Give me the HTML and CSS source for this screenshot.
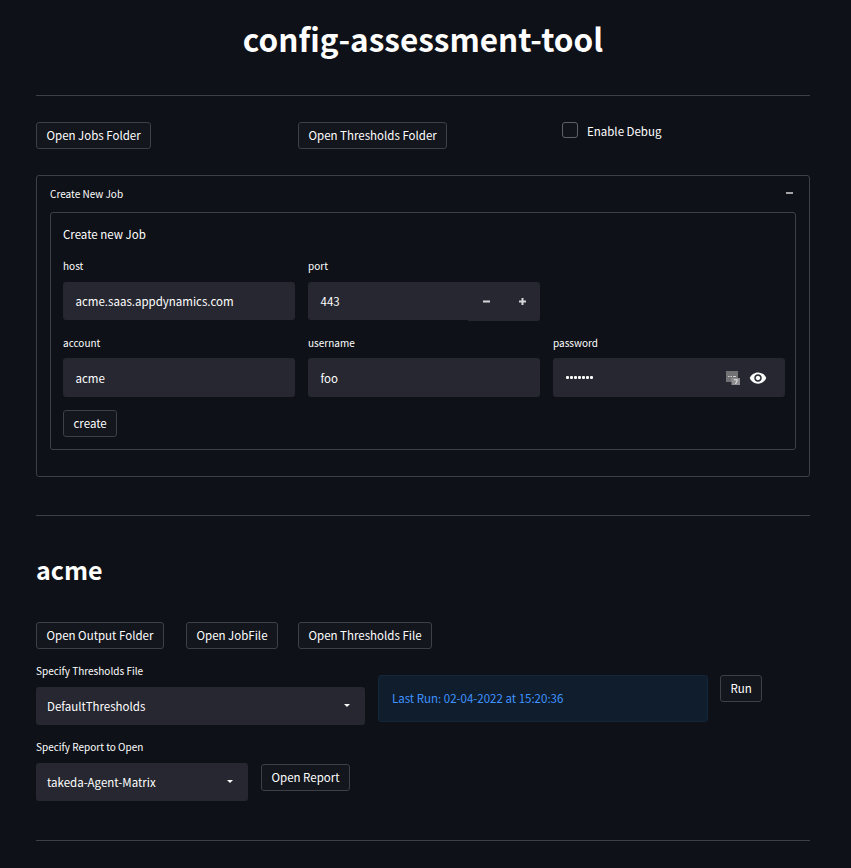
FILE: index.html
```html
<!DOCTYPE html>
<html lang="en">
  <head>
    <meta charset="utf-8">
    <meta content="width=device-width, initial-scale=1.0" name="viewport">
    <link rel="stylesheet" href="styles.css">
    <title>config-assessment-tool</title>
  </head>
  <body>
    <h1>config-assessment-tool</h1>
    <hr class="rule-top">

    <div class="top-row">
      <div><button class="btn">Open Jobs Folder</button></div>
      <div><button class="btn">Open Thresholds Folder</button></div>
      <label class="check"><span class="check-box"></span>Enable Debug</label>
    </div>

    <section class="expander">
      <div class="expander-head">
        <span>Create New Job</span>
        <svg class="collapse" width="7" height="2" viewBox="0 0 7 2"><rect width="7" height="2" fill="#a3a3a8"/></svg>
      </div>
      <form class="job-form">
        <div class="form-title">Create new Job</div>
        <div class="form-grid">
          <div class="field">
            <label>host</label>
            <div class="input">acme.saas.appdynamics.com</div>
          </div>
          <div class="field">
            <label>port</label>
            <div class="stepper">
              <div class="input stepper-value">443</div>
              <div class="stepper-btns">
                <svg width="9" height="9" viewBox="0 0 9 9"><rect x="1" y="3.500" width="7" height="2" fill="#d6d6d8"/></svg>
                <svg width="9" height="9" viewBox="0 0 9 9"><path d="M1 3.500h2.500V1h2v2.500H8v2H5.500V8h-2V5.500H1z" fill="#d6d6d8"/></svg>
              </div>
            </div>
          </div>
          <div></div>
          <div class="field low">
            <label>account</label>
            <div class="input tall">acme</div>
          </div>
          <div class="field low">
            <label>username</label>
            <div class="input tall">foo</div>
          </div>
          <div class="field low">
            <label>password</label>
            <div class="input tall password">
              <span class="dots"><i></i><i></i><i></i><i></i><i></i><i></i><i></i></span>
              <svg class="pw-icon" width="14" height="14" viewBox="0 0 14 14">
                <rect x="0" y="0" width="12" height="11" fill="#727274"/>
                <rect x="5.500" y="7" width="8.500" height="7" fill="#8e8e90"/>
                <path d="M2 5.500h1.500M4.500 5.500H6M7 5.500h3" stroke="#cfcfd1" stroke-width="1"/>
                <path d="M8 8.800h3.500L9.500 13" stroke="#e6e6e6" stroke-width="1" fill="none"/>
              </svg>
              <svg class="eye" width="18" height="18" viewBox="0 0 24 24"><path d="M12 4.500C7 4.500 2.730 7.610 1 12c1.730 4.390 6 7.500 11 7.500s9.270-3.110 11-7.500c-1.730-4.390-6-7.500-11-7.500zM12 17c-2.760 0-5-2.240-5-5s2.240-5 5-5 5 2.240 5 5-2.240 5-5 5zm0-8c-1.660 0-3 1.340-3 3s1.340 3 3 3 3-1.340 3-3-1.340-3-3-3z" fill="#fafafa"/></svg>
            </div>
          </div>
        </div>
        <button class="btn btn-create" type="button">create</button>
      </form>
    </section>

    <hr class="rule-mid">

    <h2>acme</h2>

    <div class="job-btns">
      <button class="btn">Open Output Folder</button>
      <button class="btn">Open JobFile</button>
      <button class="btn">Open Thresholds File</button>
    </div>

    <div class="run-row">
      <div class="field thresholds">
        <label>Specify Thresholds File</label>
        <div class="select">DefaultThresholds<span class="caret"></span></div>
      </div>
      <div class="info">Last Run: 02-04-2022 at 15:20:36</div>
      <button class="btn">Run</button>
    </div>

    <div class="report-row">
      <div class="field report">
        <label>Specify Report to Open</label>
        <div class="select">takeda-Agent-Matrix<span class="caret"></span></div>
      </div>
      <button class="btn">Open Report</button>
    </div>

    <hr class="rule-end">
  </body>
</html>
```

FILE: styles.css
```css
* { box-sizing: border-box; }
html, body { height: 868px; overflow: hidden; }
body {
  margin: 0;
  padding: 0 41px 0 36px;
  background: #0e1117;
  color: #fff;
  font-family: "Noto Sans CJK JP", "Noto Sans", sans-serif;
  font-size: 14px;
}
h1 {
  margin: 0;
  padding-top: 16px;
  height: 95px;
  font-size: 31.500px;
  line-height: 44px;
  font-weight: 700;
  text-align: center;
}
h2 {
  margin: 0;
  height: 71px;
  font-size: 25px;
  line-height: 36px;
  font-weight: 700;
}
hr {
  margin: 0;
  border: 0;
  height: 1px;
  background: #3d4044;
}
.rule-top { margin-bottom: 26px; }
.rule-mid { margin: 38px 0 35px; }
.rule-end { margin-top: 39px; }

.btn {
  height: 27px;
  padding: 0 9.500px;
  border: 1px solid #3d4046;
  border-radius: 3px;
  background: #13161d;
  color: #fff;
  font: 11.500px/25px "Noto Sans CJK JP", "Noto Sans", sans-serif;
  white-space: nowrap;
}

.top-row {
  display: grid;
  grid-template-columns: 246px 248px 1fr;
  column-gap: 16px;
  height: 53px;
}
.check {
  display: flex;
  align-items: flex-start;
  gap: 9px;
  font-size: 11.500px;
  line-height: 18px;
}
.check-box {
  width: 16px;
  height: 16px;
  border: 1px solid #5f6166;
  border-radius: 3px;
  background: #11141b;
}

.expander {
  height: 302px;
  padding: 0 13px;
  border: 1px solid #3d4044;
  border-radius: 3px;
}
.expander-head {
  display: flex;
  justify-content: space-between;
  align-items: center;
  height: 36px;
  padding-bottom: 2px;
  font-size: 10px;
}
.collapse { margin-right: 3px; }
.job-form {
  height: 238px;
  padding: 11px 10px 0 12px;
  border: 1px solid #3d4044;
  border-radius: 3px;
}
.form-title {
  height: 34px;
  font-size: 11.500px;
  line-height: 20px;
}
.form-grid {
  display: grid;
  grid-template-columns: repeat(3, 1fr);
  column-gap: 13px;
  row-gap: 14px;
}
.field label {
  display: block;
  height: 20px;
  margin-bottom: 4px;
  font-size: 10px;
  line-height: 16px;
}
.field.low label { margin-bottom: 3px; }
.input {
  display: flex;
  align-items: center;
  height: 38px;
  padding: 0 12.500px;
  border-radius: 3px;
  background: #262730;
  font-size: 11.500px;
}
.input.tall { height: 39px; }
.stepper { display: flex; }
.stepper-value {
  flex: 1;
  border-radius: 3px 0 0 3px;
}
.stepper-btns {
  display: flex;
  align-items: center;
  justify-content: space-around;
  width: 72px;
  height: 39px;
  border-radius: 0 3px 3px 0;
  background: #262730;
}
.password { padding-right: 18px; }
.dots {
  display: flex;
  gap: 1px;
  flex: 1;
}
.dots i {
  width: 3px;
  height: 3px;
  border-radius: 1px;
  background: #fafafa;
}
.pw-icon { margin-right: 9px; }
.btn-create { margin-top: 13px; }

.job-btns {
  display: grid;
  grid-template-columns: 138px 100px auto;
  justify-items: start;
  column-gap: 12px;
  margin-bottom: 14px;
}

.run-row {
  display: flex;
  align-items: flex-start;
  gap: 13px;
  height: 76px;
}
.run-row .btn { margin-left: -1px; margin-top: 12px; }
.thresholds { width: 329px; }
.info {
  width: 330px;
  height: 47px;
  margin-top: 12px;
  padding: 0 13px;
  border: 1px solid #14263a;
  border-radius: 3px;
  background: #0f1d2d;
  color: #3f93ff;
  font-size: 11.500px;
  line-height: 45px;
}
.select {
  display: flex;
  align-items: center;
  justify-content: space-between;
  height: 38px;
  padding: 0 15px 1px 11px;
  border-radius: 3px;
  background: #262730;
  font-size: 11.500px;
}
.caret {
  width: 0;
  height: 0;
  border: 3.500px solid transparent;
  border-top: 3.500px solid #fafafa;
  border-bottom: 0;
}
.report-row {
  display: flex;
  align-items: flex-start;
  gap: 13px;
}
.report { width: 212px; }
.report-row .btn { margin-top: 25px; }
```
